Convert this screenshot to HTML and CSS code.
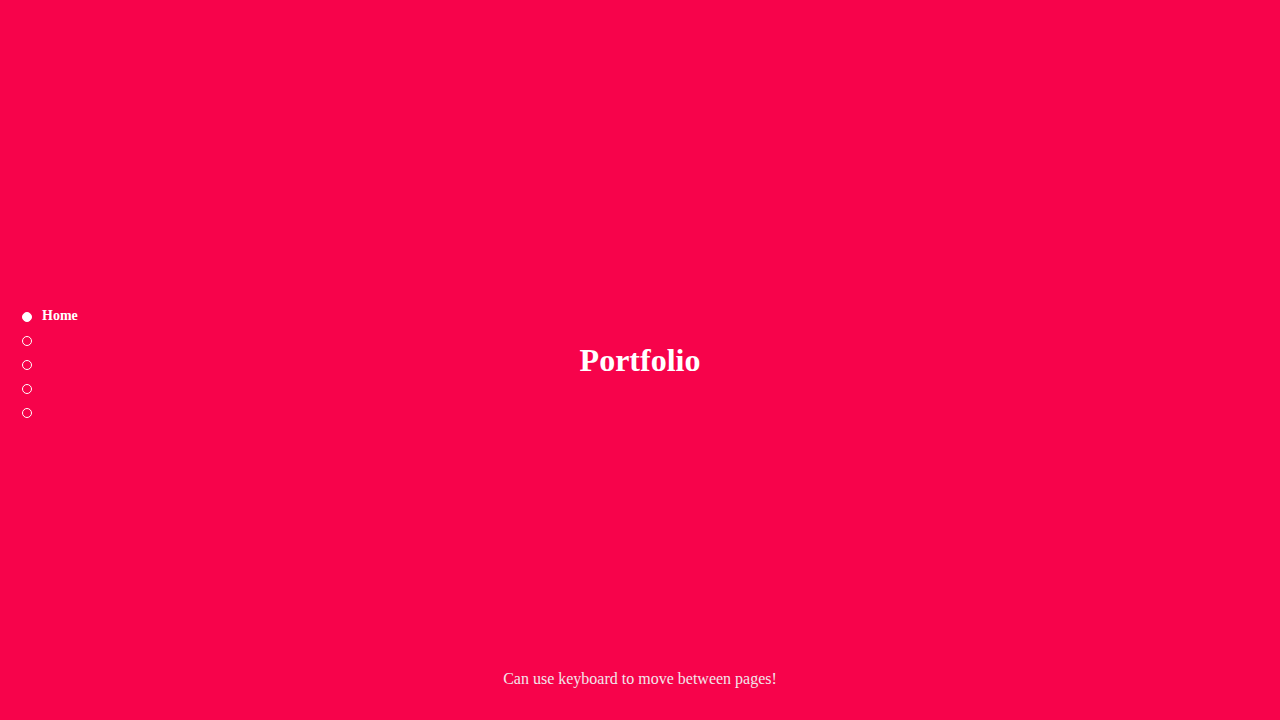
FILE: index.html
```html
<!DOCTYPE html>
<html lang="en">
<head>
<meta charset="utf-8">
<title>Portfolio</title>
<link rel="stylesheet" href="styles.css">
</head>
<body>
<nav class="dots">
  <ul class="dots-list">
    <li class="dot-item active"><span class="dot"></span><span class="dot-label">Home</span></li>
    <li class="dot-item"><span class="dot"></span></li>
    <li class="dot-item"><span class="dot"></span></li>
    <li class="dot-item"><span class="dot"></span></li>
    <li class="dot-item"><span class="dot"></span></li>
  </ul>
</nav>
<main class="page">
  <h1 class="title">Portfolio</h1>
</main>
<footer class="hint">Can use keyboard to move between pages!</footer>
</body>
</html>
```
FILE: styles.css
```css
html, body {
  margin: 0;
  padding: 0;
  height: 100%;
}
body {
  background: #f7034b;
  color: #fff;
  font-family: "Liberation Serif", "Times New Roman", serif;
  overflow: hidden;
  position: relative;
}
.page {
  height: 100%;
  display: flex;
  align-items: center;
  justify-content: center;
}
.title {
  margin: 0;
  font-size: 32px;
  font-weight: bold;
  line-height: 1.15;
}
.dots {
  position: absolute;
  left: 22px;
  top: 305px;
}
.dots-list {
  list-style: none;
  margin: 0;
  padding: 0;
  display: flex;
  flex-direction: column;
}
.dot-item {
  height: 24px;
  display: flex;
  align-items: center;
  gap: 10px;
}
.dot {
  width: 8px;
  height: 8px;
  border: 1px solid #fff;
  border-radius: 50%;
  box-sizing: content-box;
}
.dot-item.active .dot {
  background: #fff;
}
.dot-label {
  font-size: 14px;
  font-weight: bold;
  margin-top: -3px;
}
.hint {
  position: absolute;
  left: 0;
  right: 0;
  bottom: 32px;
  text-align: center;
  font-size: 16px;
  color: #f2e6ea;
}
```
